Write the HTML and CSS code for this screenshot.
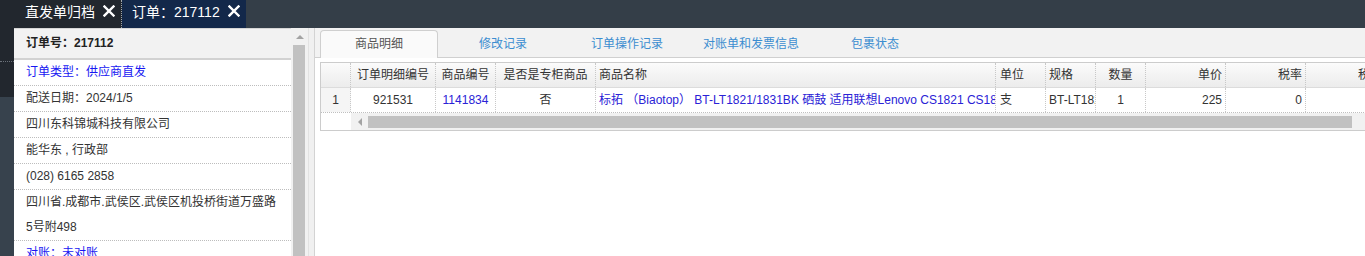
FILE: index.html
```html
<!DOCTYPE html>
<html lang="zh-CN">
<head>
<meta charset="utf-8">
<title>订单：217112</title>
<link rel="stylesheet" href="styles.css">
</head>
<body>
<div class="topbar">
  <div class="top-tab top-tab--archive">
    <span>直发单归档</span>
    <svg class="close" viewBox="0 0 12 12"><path d="M1.5 1.5 L10.5 10.5 M10.5 1.5 L1.5 10.5" stroke="#fff" stroke-width="2.4" stroke-linecap="square"/></svg>
  </div>
  <div class="top-tab top-tab--order">
    <span>订单：217112</span>
    <svg class="close" viewBox="0 0 12 12"><path d="M1.5 1.5 L10.5 10.5 M10.5 1.5 L1.5 10.5" stroke="#fff" stroke-width="2.4" stroke-linecap="square"/></svg>
  </div>
</div>
<div class="main">
  <div class="edge">
    <div class="edge-dark"><div class="edge-item"></div></div>
  </div>
  <div class="left-panel">
    <div class="info">
      <div class="info-head">订单号：217112</div>
      <div class="info-row info-row--blue">订单类型：供应商直发</div>
      <div class="info-row">配送日期：2024/1/5</div>
      <div class="info-row">四川东科锦城科技有限公司</div>
      <div class="info-row">能华东 , 行政部</div>
      <div class="info-row">(028) 6165 2858</div>
      <div class="info-row">四川省.成都市.武侯区.武侯区机投桥街道万盛路<br>5号附498</div>
      <div class="info-row info-row--blue">对账：未对账</div>
    </div>
    <div class="vscroll">
      <div class="vscroll-up"><span class="tri-up"></span></div>
      <div class="vscroll-thumb"></div>
    </div>
  </div>
  <div class="splitter"></div>
  <div class="right-panel">
    <div class="tabs">
      <div class="tab tab--active">商品明细</div>
      <div class="tab">修改记录</div>
      <div class="tab">订单操作记录</div>
      <div class="tab">对账单和发票信息</div>
      <div class="tab">包裹状态</div>
    </div>
    <div class="content">
      <div class="grid">
        <div class="grid-row grid-head">
          <div class="c c-rn"></div>
          <div class="c c-id center">订单明细编号</div>
          <div class="c c-sku center">商品编号</div>
          <div class="c c-flag center">是否是专柜商品</div>
          <div class="c c-name">商品名称</div>
          <div class="c c-unit">单位</div>
          <div class="c c-spec">规格</div>
          <div class="c c-qty center">数量</div>
          <div class="c c-price right">单价</div>
          <div class="c c-rate right">税率</div>
          <div class="c c-tax right">税额</div>
        </div>
        <div class="grid-row grid-data">
          <div class="c c-rn center">1</div>
          <div class="c c-id center">921531</div>
          <div class="c c-sku center link">1141834</div>
          <div class="c c-flag center">否</div>
          <div class="c c-name link">标拓 （Biaotop） BT-LT1821/1831BK 硒鼓 适用联想Lenovo CS1821 CS1831 CS1831W CS2021 CS2021W</div>
          <div class="c c-unit">支</div>
          <div class="c c-spec">BT-LT1821/1831BK</div>
          <div class="c c-qty center">1</div>
          <div class="c c-price right">225</div>
          <div class="c c-rate right">0</div>
          <div class="c c-tax right"></div>
        </div>
        <div class="hscroll">
          <div class="hscroll-left"><span class="tri-left"></span></div>
          <div class="hscroll-thumb"></div>
        </div>
      </div>
    </div>
  </div>
</div>
</body>
</html>
```
FILE: styles.css
```css
* { box-sizing: border-box; }
html, body { margin: 0; padding: 0; }
body {
  width: 1365px;
  height: 256px;
  overflow: hidden;
  background: #fff;
  color: #333;
  font-family: "Liberation Sans", Arial, "Noto Sans CJK SC", sans-serif;
  font-size: 12px;
}

/* top bar */
.topbar {
  display: flex;
  height: 28px;
  background: #343e48;
}
.top-tab {
  display: flex;
  align-items: center;
  height: 28px;
  padding-bottom: 6px;
  color: #fff;
  font-size: 14px;
  white-space: nowrap;
}
.top-tab--archive {
  width: 122px;
  padding-left: 25px;
  background: #22272e;
  border-right: 1px dotted #a0a6ad;
}
.top-tab--order {
  width: 124px;
  padding-left: 10px;
  background: #13284a;
}
.top-tab .close {
  width: 12px;
  height: 12px;
  margin-left: 8px;
  flex: none;
}

/* main area */
.main {
  display: flex;
  height: 228px;
}
.edge {
  width: 14px;
  flex: none;
  background: #37424d;
}
.edge-dark {
  height: 69px;
  background: #22272e;
}
.edge-item {
  height: 34px;
  border-bottom: 1px dotted #6b7179;
}

/* left info panel */
.left-panel {
  display: flex;
  width: 294px;
  flex: none;
}
.info {
  width: 277px;
  background: #fff;
}
.info-head {
  height: 32px;
  padding-left: 12px;
  line-height: 29px;
  font-weight: bold;
  color: #222;
  background: #f2f2f2;
  border-top: 1px solid #d6d6d6;
  border-bottom: 2px solid #d2d2d2;
}
.info-row {
  padding-left: 12px;
  line-height: 25px;
  border-bottom: 1px dotted #bdbdbd;
  white-space: nowrap;
}
.info-row--blue { color: #1717f2; }

.vscroll {
  width: 17px;
  background: #f1f1f1;
  display: flex;
  flex-direction: column;
}
.vscroll-up {
  height: 17px;
  display: flex;
  align-items: center;
  justify-content: center;
}
.tri-up {
  width: 0;
  height: 0;
  border-left: 4px solid transparent;
  border-right: 4px solid transparent;
  border-bottom: 4px solid #a3a3a3;
}
.vscroll-thumb {
  flex: 1;
  margin: 0 3px 0 2px;
  background: #c1c1c1;
}

.splitter {
  width: 6px;
  flex: none;
  background: #f0f0f0;
  border-left: 1px solid #e2e2e2;
}

/* right panel */
.right-panel {
  flex: 1;
  min-width: 0;
  border-left: 1px solid #d3d3d3;
  background: #fff;
}
.tabs {
  display: flex;
  gap: 6px;
  height: 30px;
  padding: 2px 0 0 5px;
  background: #f2f2f2;
  border-bottom: 1px solid #d0d0d0;
}
.tab {
  width: 118px;
  height: 27px;
  line-height: 26px;
  text-align: center;
  color: #3b8dd0;
  border: 1px solid transparent;
}
.tab--active {
  color: #555;
  background: #fafafa;
  border-color: #cfcfcf;
  border-bottom: none;
  border-radius: 4px 4px 0 0;
  height: 28px;
  margin-bottom: -1px;
}

.content {
  padding: 4px 0 0 5px;
}
.grid {
  width: 1070px;
  border: 1px solid #cccccc;
  border-right: none;
  overflow: hidden;
}
.grid-row {
  display: flex;
  height: 25px;
}
.grid-head {
  background: linear-gradient(#fbfbfb, #ececec);
  border-bottom: 1px solid #dcdcdc;
}
.grid-data {
  border-bottom: 1px dotted #bfbfbf;
}
.c {
  flex: none;
  height: 24px;
  line-height: 24px;
  padding: 0 3px;
  border-right: 1px dotted #c8c8c8;
  white-space: nowrap;
  overflow: hidden;
}
.grid-data .c-rn { background: #f5f5f5; }
.center { text-align: center; }
.right { text-align: right; }
.link { color: #2a22d6; }

.c-rn { width: 30px; }
.c-id { width: 85px; }
.c-sku { width: 60px; }
.c-flag { width: 100px; }
.c-name { width: 400px; }
.c-unit { width: 50px; padding-left: 4px; }
.c-spec { width: 50px; }
.c-qty { width: 50px; }
.c-price { width: 80px; }
.c-rate { width: 80px; }
.c-tax { width: 80px; }

.hscroll {
  display: flex;
  width: 1039px;
  height: 17px;
  margin-left: 30px;
  background: #f1f1f1;
  align-items: center;
}
.hscroll-left {
  width: 17px;
  height: 17px;
  display: flex;
  align-items: center;
  justify-content: center;
}
.tri-left {
  width: 0;
  height: 0;
  border-top: 4px solid transparent;
  border-bottom: 4px solid transparent;
  border-right: 4px solid #a3a3a3;
}
.hscroll-thumb {
  width: 984px;
  height: 12px;
  background: #c1c1c1;
}
```
